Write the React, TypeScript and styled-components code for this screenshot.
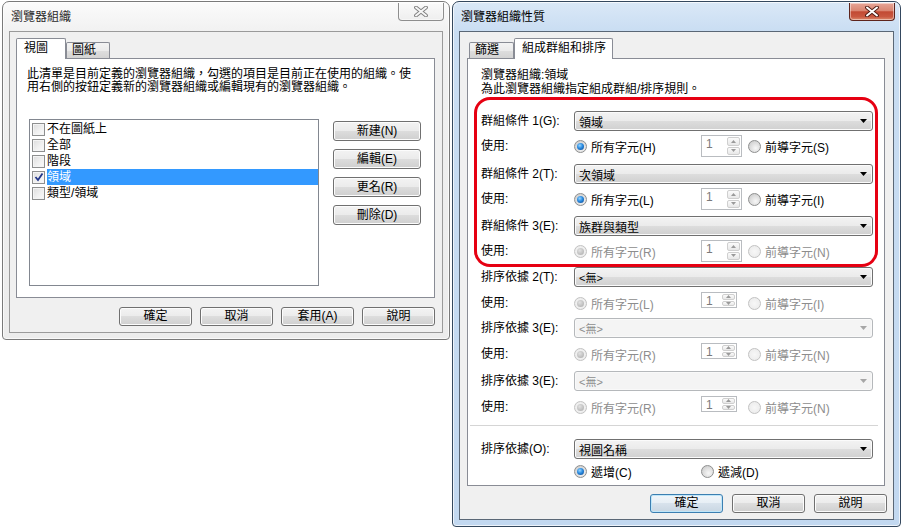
import styled, { createGlobalStyle } from "styled-components";

interface Rule {
  label: string;
  value: string;
  comboOn: boolean;
  all: string;
  lead: string;
  useOn: boolean;
  comboTop: number;
  useTop: number;
}

const groupRules: Rule[] = [
  { label: "群組條件 1(G):", value: "領域", comboOn: true, all: "所有字元(H)", lead: "前導字元(S)", useOn: true, comboTop: 0, useTop: 4 },
  { label: "群組條件 2(T):", value: "次領域", comboOn: true, all: "所有字元(L)", lead: "前導字元(I)", useOn: true, comboTop: 7, useTop: 4 },
  { label: "群組條件 3(E):", value: "族群與類型", comboOn: true, all: "所有字元(R)", lead: "前導字元(N)", useOn: false, comboTop: 6, useTop: 4 },
];

const sortRules: Rule[] = [
  { label: "排序依據 2(T):", value: "<無>", comboOn: true, all: "所有字元(L)", lead: "前導字元(I)", useOn: false, comboTop: 5, useTop: 5 },
  { label: "排序依據 3(E):", value: "<無>", comboOn: false, all: "所有字元(R)", lead: "前導字元(N)", useOn: false, comboTop: 4, useTop: 5 },
  { label: "排序依據 3(E):", value: "<無>", comboOn: false, all: "所有字元(R)", lead: "前導字元(N)", useOn: false, comboTop: 6, useTop: 5 },
];

const organizations = [
  { name: "不在圖紙上", checked: false },
  { name: "全部", checked: false },
  { name: "階段", checked: false },
  { name: "領域", checked: true },
  { name: "類型/領域", checked: false },
];

const GlobalStyle = createGlobalStyle`
  html, body {
    margin: 0;
    padding: 0;
    background: #ffffff;
  }
  body {
    font-family: "Liberation Sans", "Noto Sans CJK TC", sans-serif;
    font-size: 12px;
    color: #000000;
  }
  * {
    box-sizing: border-box;
  }
`;

const Desk = styled.div`
  width: 906px;
  height: 532px;
  display: flex;
  align-items: flex-start;
  gap: 2px;
  padding: 1px 0 0 2px;
`;

const Window = styled.div<{ $active?: boolean; $width: number }>`
  width: ${(p) => p.$width}px;
  border: 1px solid ${(p) => (p.$active ? "#34485e" : "#7a7a7a")};
  border-radius: 7px 7px 4px 4px;
  padding: 0 6px 6px;
  background: ${(p) =>
    p.$active
      ? "linear-gradient(#dae8f7 0, #c9ddf2 30px, #c2d8f0 100%)"
      : "linear-gradient(#fbfbfb 0, #f1f1f1 30px, #ececec 100%)"};
  box-shadow: inset 0 0 0 1px rgba(255, 255, 255, 0.7);
`;

const TitleBar = styled.div`
  height: 29px;
  display: flex;
  justify-content: space-between;
  align-items: flex-start;
`;

const Title = styled.div<{ $active?: boolean }>`
  padding: 9px 0 0 2px;
  line-height: 12px;
  color: ${(p) => (p.$active ? "#000000" : "#2a2a2a")};
`;

const CloseButton = styled.div<{ $active?: boolean }>`
  width: 46px;
  height: 18px;
  margin: 1px -1px 0 0;
  display: flex;
  align-items: center;
  justify-content: center;
  border: 1px solid ${(p) => (p.$active ? "#5d241c" : "#8e8e8e")};
  border-top: none;
  border-radius: 0 0 4px 4px;
  background: ${(p) =>
    p.$active
      ? "linear-gradient(#e7a597 0%, #da8672 45%, #c24a33 52%, #c95840 80%, #dc8a6c 100%)"
      : "linear-gradient(#fafafa, #eeeeee)"};
  box-shadow: inset 0 0 0 1px rgba(255, 255, 255, 0.45);
`;

const Client = styled.div<{ $active?: boolean; $pad: string }>`
  border: 1px solid ${(p) => (p.$active ? "#5a6776" : "#9a9a9a")};
  background: #f0f0f0;
  padding: ${(p) => p.$pad};
  display: flex;
  flex-direction: column;
`;

const TabStrip = styled.div`
  height: 20px;
  display: flex;
  align-items: flex-end;
  position: relative;
  z-index: 1;
`;

const Tab = styled.div<{ $selected?: boolean; $w: number; $pl: number; $ml?: number }>`
  width: ${(p) => p.$w}px;
  margin-left: ${(p) => p.$ml ?? 0}px;
  height: ${(p) => (p.$selected ? 21 : 16)}px;
  margin-bottom: ${(p) => (p.$selected ? -1 : 0)}px;
  padding-left: ${(p) => p.$pl}px;
  border: 1px solid #898c95;
  border-bottom: none;
  border-radius: 2px 2px 0 0;
  white-space: nowrap;
  line-height: ${(p) => (p.$selected ? 19 : 15)}px;
  background: ${(p) =>
    p.$selected ? "#ffffff" : "linear-gradient(#f3f3f3 0%, #ebebeb 50%, #dedede 51%, #d3d3d3 100%)"};
`;

const Panel = styled.div<{ $h?: number; $pad: string }>`
  ${(p) => (p.$h ? `height: ${p.$h}px;` : "")}
  border: 1px solid #898c95;
  background: #ffffff;
  padding: ${(p) => p.$pad};
  display: flex;
  flex-direction: column;
`;

const Intro = styled.div<{ $lh: number }>`
  line-height: ${(p) => p.$lh}px;
  white-space: nowrap;
`;

const ListArea = styled.div`
  margin-top: 25px;
  display: flex;
  align-items: flex-start;
`;

const ListBox = styled.div`
  width: 290px;
  height: 167px;
  margin-left: 2px;
  border: 1px solid #828790;
  background: #ffffff;
  padding: 1px 0 0 2px;
`;

const ListItem = styled.div`
  height: 16px;
  display: flex;
  align-items: center;
  gap: 2px;
`;

const ItemText = styled.span<{ $selected?: boolean }>`
  flex: 1;
  height: 16px;
  line-height: 16px;
  color: ${(p) => (p.$selected ? "#ffffff" : "#000000")};
  background: ${(p) => (p.$selected ? "#3399ff" : "transparent")};
`;

const CheckMark = styled.span`
  width: 13px;
  height: 13px;
  flex: none;
  border: 1px solid #8e8f8f;
  background: linear-gradient(135deg, #dcdcdc 0%, #f0f0f0 55%, #fbfbfb 100%);
  box-shadow: inset 0 0 0 1px #f4f4f4;
  display: flex;
  align-items: center;
  justify-content: center;
`;

const SideButtons = styled.div`
  margin-left: 14px;
  padding-top: 2px;
  display: flex;
  flex-direction: column;
  gap: 8px;
`;

const PushButton = styled.div<{ $w: number; $h: number; $focus?: boolean }>`
  width: ${(p) => p.$w}px;
  height: ${(p) => p.$h}px;
  line-height: ${(p) => p.$h - 2}px;
  text-align: center;
  white-space: nowrap;
  border: 1px solid ${(p) => (p.$focus ? "#3c7fb1" : "#707070")};
  border-radius: 3px;
  background: ${(p) =>
    p.$focus
      ? "linear-gradient(#f1f6fa 0%, #e6eef5 49%, #d7e2ec 50%, #c9d6e2 100%)"
      : "linear-gradient(#f3f3f3 0%, #ebebeb 49%, #dddddd 50%, #cfcfcf 100%)"};
  box-shadow: inset 0 0 0 1px ${(p) => (p.$focus ? "#bfe6f9" : "#fcfcfc")};
`;

const ButtonRow = styled.div<{ $top: number; $gap: number; $right?: number }>`
  margin-top: ${(p) => p.$top}px;
  margin-right: ${(p) => p.$right ?? 0}px;
  display: flex;
  justify-content: flex-end;
  gap: ${(p) => p.$gap}px;
`;

const Highlight = styled.div`
  position: relative;
  margin-top: 15px;
  display: flex;
  flex-direction: column;

  &::after {
    content: "";
    position: absolute;
    top: -14px;
    left: -7px;
    right: -5px;
    bottom: -5px;
    border: 3px solid #e60012;
    border-radius: 16px;
    pointer-events: none;
  }
`;

const ComboRow = styled.div<{ $top: number }>`
  margin-top: ${(p) => p.$top}px;
  height: 20px;
  display: flex;
  align-items: center;
`;

const FieldLabel = styled.span`
  width: 93px;
  flex: none;
  white-space: nowrap;
  line-height: 14px;
`;

const Combo = styled.div<{ $on: boolean }>`
  flex: 1;
  height: 20px;
  padding: 0 5px 0 4px;
  display: flex;
  align-items: center;
  justify-content: space-between;
  border: 1px solid ${(p) => (p.$on ? "#707070" : "#b5b8bb")};
  border-radius: 3px;
  color: ${(p) => (p.$on ? "#000000" : "#8d8d8d")};
  background: ${(p) =>
    p.$on ? "linear-gradient(#f3f3f3 0%, #ebebeb 49%, #dddddd 50%, #d0d0d0 100%)" : "#f4f4f4"};
  box-shadow: inset 0 0 0 1px ${(p) => (p.$on ? "#fbfbfb" : "#f9f9f9")};
`;

const ComboValue = styled.span<{ $small?: boolean }>`
  font-size: ${(p) => (p.$small ? 11 : 12)}px;
  white-space: nowrap;
`;

const UseRow = styled.div<{ $top: number; $h: number }>`
  margin-top: ${(p) => p.$top}px;
  height: ${(p) => p.$h}px;
  display: flex;
  align-items: center;
`;

const RadioOption = styled.span<{ $w?: number; $off?: boolean }>`
  ${(p) => (p.$w ? `width: ${p.$w}px;` : "")}
  flex: none;
  display: inline-flex;
  align-items: center;
  gap: 4px;
  white-space: nowrap;
  color: ${(p) => (p.$off ? "#8d8d8d" : "#000000")};
`;

const RadioMark = styled.span<{ $checked?: boolean; $off?: boolean }>`
  position: relative;
  flex: none;
  width: 13px;
  height: 13px;
  border-radius: 50%;
  border: 1px solid ${(p) => (p.$off ? "#c2c2c2" : "#8e8f8f")};
  background: ${(p) =>
    p.$off
      ? "radial-gradient(circle, #f7f7f7 0, #e9e9e9 100%)"
      : "radial-gradient(circle at 60% 65%, #f7f7f7 0, #dcdcdc 55%, #c2c2c2 100%)"};

  &::after {
    content: "";
    position: absolute;
    left: 2px;
    top: 2px;
    width: 7px;
    height: 7px;
    border-radius: 50%;
    display: ${(p) => (p.$checked ? "block" : "none")};
    background: ${(p) =>
      p.$off
        ? "radial-gradient(circle at 40% 35%, #e2e2e2 0, #a9a9a9 100%)"
        : "radial-gradient(circle at 40% 35%, #9ad6ff 0, #2a8be0 45%, #0b3f86 100%)"};
  }
`;

const SpinSlot = styled.div<{ $h: number }>`
  width: 47px;
  flex: none;
  align-self: flex-start;
  height: ${(p) => p.$h}px;
`;

const SpinBox = styled.div<{ $w: number; $h: number }>`
  width: ${(p) => p.$w}px;
  height: ${(p) => p.$h}px;
  display: flex;
  border: 1px solid #b9bcc0;
  background: #ffffff;
`;

const SpinValue = styled.span`
  flex: 1;
  padding: 2px 0 0 4px;
  line-height: 12px;
  color: #7a7a7a;
`;

const SpinButtons = styled.div`
  width: 15px;
  display: flex;
  flex-direction: column;
  gap: 1px;
  padding: 1px;
`;

const SpinArrow = styled.div`
  flex: 1;
  display: flex;
  align-items: center;
  justify-content: center;
  border: 1px solid #cfcfcf;
  border-radius: 2px;
  background: linear-gradient(#fbfbfb, #e8e8e8);
`;

const Divider = styled.div`
  margin: 7px -5px 0 -11px;
  border-top: 1px solid #d5d5d5;
`;

const DirectionRow = styled.div`
  margin-top: 4px;
  height: 16px;
  padding-left: 93px;
  display: flex;
  align-items: center;
`;

const CloseGlyph = ({ active }: { active?: boolean }) => (
  <svg width="16" height="11" viewBox="0 0 16 11">
    <path d="M3 1.5 L13 9.5 M13 1.5 L3 9.5" stroke={active ? "#4c1a12" : "#7e7e7e"} strokeWidth="3.8" strokeLinecap="round" />
    <path d="M3 1.5 L13 9.5 M13 1.5 L3 9.5" stroke={active ? "#ffffff" : "#f6f6f6"} strokeWidth="2" strokeLinecap="round" />
  </svg>
);

const DropArrow = ({ on }: { on: boolean }) => (
  <svg width="7" height="4" viewBox="0 0 7 4">
    <polygon points="0,0 7,0 3.5,4" fill={on ? "#000000" : "#a6a6a6"} />
  </svg>
);

const Tick = () => (
  <svg width="10" height="10" viewBox="0 0 10 10">
    <path d="M1.5 5 L4 8 L8.5 1.5" fill="none" stroke="#23378a" strokeWidth="1.8" />
  </svg>
);

const Spin = ({ w, h }: { w: number; h: number }) => (
  <SpinBox $w={w} $h={h}>
    <SpinValue>1</SpinValue>
    <SpinButtons>
      <SpinArrow>
        <svg width="5" height="3" viewBox="0 0 5 3">
          <polygon points="0,3 5,3 2.5,0" fill="#9a9a9a" />
        </svg>
      </SpinArrow>
      <SpinArrow>
        <svg width="5" height="3" viewBox="0 0 5 3">
          <polygon points="0,0 5,0 2.5,3" fill="#9a9a9a" />
        </svg>
      </SpinArrow>
    </SpinButtons>
  </SpinBox>
);

const RuleBlock = ({ rule, compact }: { rule: Rule; compact?: boolean }) => (
  <>
    <ComboRow $top={rule.comboTop}>
      <FieldLabel>{rule.label}</FieldLabel>
      <Combo $on={rule.comboOn}>
        <ComboValue $small={rule.value === "<無>"}>{rule.value}</ComboValue>
        <DropArrow on={rule.comboOn} />
      </Combo>
    </ComboRow>
    <UseRow $top={rule.useTop} $h={22}>
      <FieldLabel>使用:</FieldLabel>
      <RadioOption $w={127} $off={!rule.useOn}>
        <RadioMark $checked $off={!rule.useOn} />
        {rule.all}
      </RadioOption>
      <SpinSlot $h={compact ? 16 : 22}>
        <Spin w={compact ? 36 : 41} h={compact ? 16 : 22} />
      </SpinSlot>
      <RadioOption $off={!rule.useOn}>
        <RadioMark $off={!rule.useOn} />
        {rule.lead}
      </RadioOption>
    </UseRow>
  </>
);

const App = () => {
  return (
    <>
      <GlobalStyle />
      <Desk>
        <Window $width={448}>
          <TitleBar>
            <Title>瀏覽器組織</Title>
            <CloseButton>
              <CloseGlyph />
            </CloseButton>
          </TitleBar>
          <Client $pad="6px 7px 6px 6px">
            <TabStrip>
              <Tab $selected $w={50} $pl={7}>視圖</Tab>
              <Tab $w={44} $pl={5}>圖紙</Tab>
            </TabStrip>
            <Panel $h={240} $pad="9px 10px 0 10px">
              <Intro $lh={13}>
                此清單是目前定義的瀏覽器組織，勾選的項目是目前正在使用的組織。使
                <br />
                用右側的按鈕定義新的瀏覽器組織或編輯現有的瀏覽器組織。
              </Intro>
              <ListArea>
                <ListBox>
                  {organizations.map((org) => (
                    <ListItem key={org.name}>
                      <CheckMark>{org.checked && <Tick />}</CheckMark>
                      <ItemText $selected={org.checked}>{org.name}</ItemText>
                    </ListItem>
                  ))}
                </ListBox>
                <SideButtons>
                  {["新建(N)", "編輯(E)", "更名(R)", "刪除(D)"].map((label) => (
                    <PushButton key={label} $w={88} $h={20}>
                      {label}
                    </PushButton>
                  ))}
                </SideButtons>
              </ListArea>
            </Panel>
            <ButtonRow $top={9} $gap={8}>
              {["確定", "取消", "套用(A)", "說明"].map((label) => (
                <PushButton key={label} $w={73} $h={19}>
                  {label}
                </PushButton>
              ))}
            </ButtonRow>
          </Client>
        </Window>

        <Window $active $width={449}>
          <TitleBar>
            <Title $active>瀏覽器組織性質</Title>
            <CloseButton $active>
              <CloseGlyph active />
            </CloseButton>
          </TitleBar>
          <Client $active $pad="6px 8px 6px 7px">
            <TabStrip>
              <Tab $w={45} $pl={5} $ml={2}>篩選</Tab>
              <Tab $selected $w={99} $pl={7}>組成群組和排序</Tab>
            </TabStrip>
            <Panel $pad="9px 11px 6px 13px">
              <Intro $lh={14}>
                瀏覽器組織:領域
                <br />
                為此瀏覽器組織指定組成群組/排序規則。
              </Intro>
              <Highlight>
                {groupRules.map((rule) => (
                  <RuleBlock key={rule.label} rule={rule} />
                ))}
              </Highlight>
              {sortRules.map((rule, i) => (
                <RuleBlock key={i} rule={rule} compact />
              ))}
              <Divider />
              <ComboRow $top={13}>
                <FieldLabel>排序依據(O):</FieldLabel>
                <Combo $on>
                  <ComboValue>視圖名稱</ComboValue>
                  <DropArrow on />
                </Combo>
              </ComboRow>
              <DirectionRow>
                <RadioOption $w={127}>
                  <RadioMark $checked />
                  遞增(C)
                </RadioOption>
                <RadioOption>
                  <RadioMark />
                  遞減(D)
                </RadioOption>
              </DirectionRow>
            </Panel>
            <ButtonRow $top={8} $gap={9} $right={-2}>
              <PushButton $w={73} $h={19} $focus>
                確定
              </PushButton>
              <PushButton $w={73} $h={19}>
                取消
              </PushButton>
              <PushButton $w={73} $h={19}>
                說明
              </PushButton>
            </ButtonRow>
          </Client>
        </Window>
      </Desk>
    </>
  );
};

export default App;
